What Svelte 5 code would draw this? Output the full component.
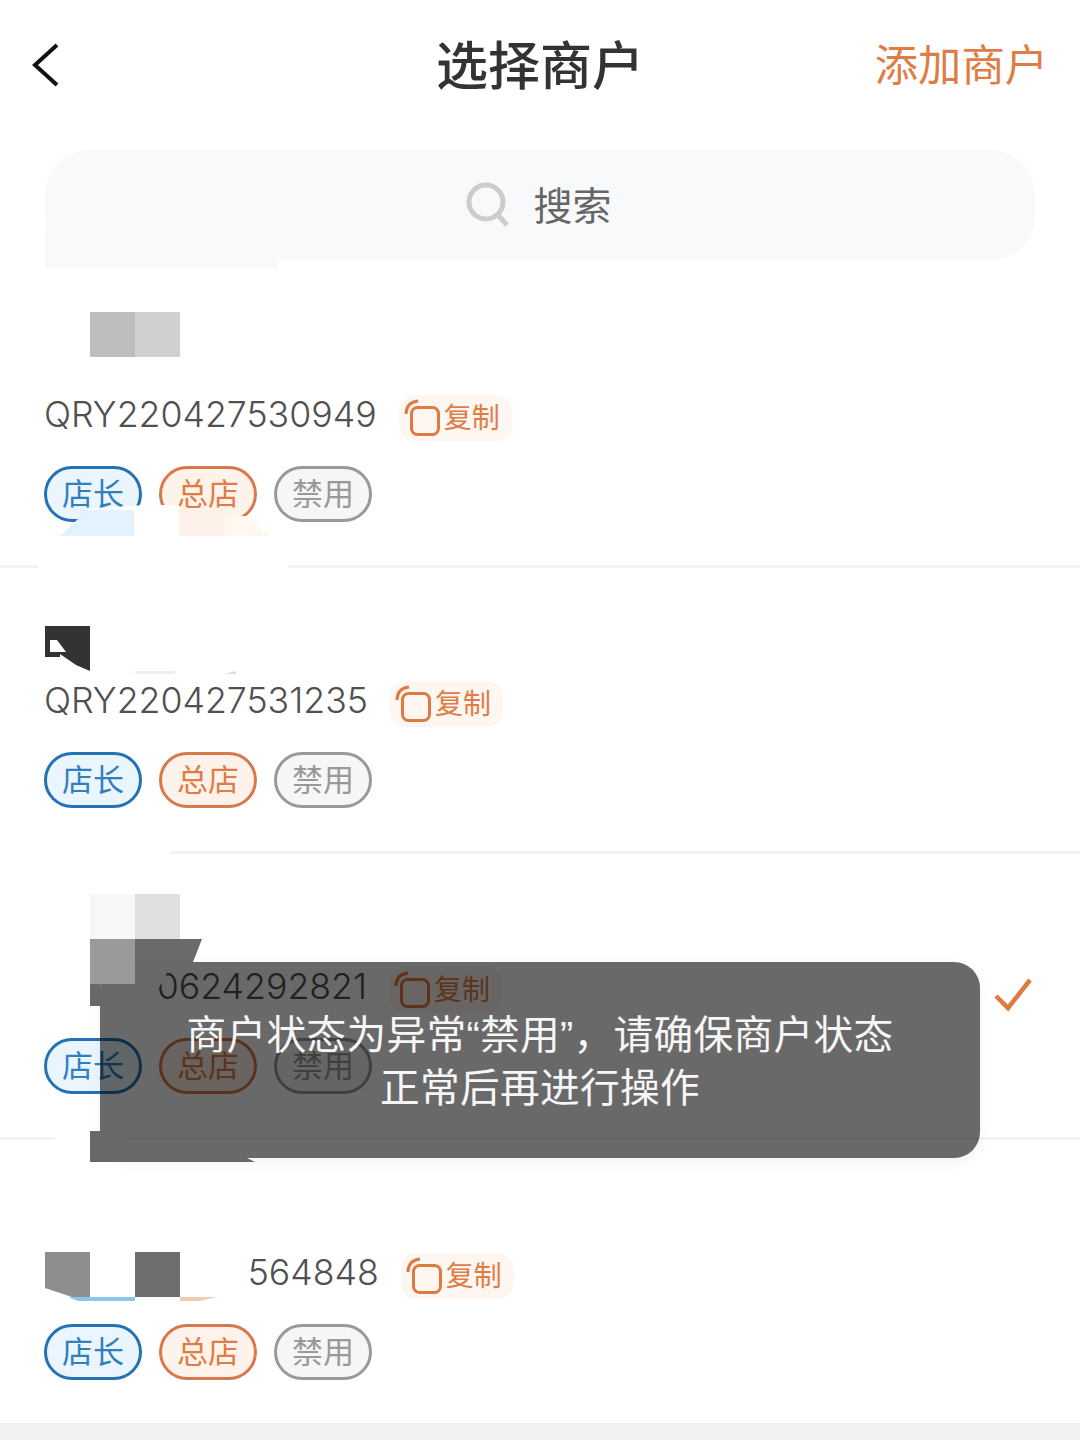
<script>
  const tags = [
    { label: '店长', kind: 'blue' },
    { label: '总店', kind: 'orange' },
    { label: '禁用', kind: 'grey' }
  ];
  const merchants = [
    { code: 'QRY220427530949', selected: false },
    { code: 'QRY220427531235', selected: false },
    { code: 'QRY770624292821', selected: true },
    { code: 'QRY220628564848', selected: false }
  ];
</script>

<div class="page">
  <header class="nav">
    <button class="back" aria-label="返回">
      <svg width="28" height="44" viewBox="0 0 28 44"><path d="M25 2 3 22l22 20" fill="none" stroke="#111" stroke-width="4"/></svg>
    </button>
    <h1>选择商户</h1>
    <span class="add">添加商户</span>
  </header>

  <div class="search">
    <svg width="46" height="46" viewBox="0 0 46 46"><circle cx="21" cy="21" r="17" fill="none" stroke="#ccc" stroke-width="5"/><path d="m32 33 10 11" fill="none" stroke="#ccc" stroke-width="5"/></svg>
    <span>搜索</span>
  </div>

  <ul class="list">
    {#each merchants as m}
      <li class="row">
        <div class="info">
          <div class="code-line">
            <span class="code">{m.code}</span>
            <span class="copy">
              <svg width="38" height="38" viewBox="0 0 38 38"><rect x="7.5" y="8.5" width="27" height="27" rx="6" fill="none" stroke="#df7a43" stroke-width="3"/><path d="M2 15C2 8 6 3 14 2" fill="none" stroke="#df7a43" stroke-width="3"/></svg>
              <span class="copy-label">复制</span>
            </span>
          </div>
          <div class="tags">
            {#each tags as t}
              <span class="tag {t.kind}">{t.label}</span>
            {/each}
          </div>
        </div>
        {#if m.selected}
          <svg class="check" width="38" height="36" viewBox="0 0 38 36"><path d="M2 19 14 31 36 3" fill="none" stroke="#df7a43" stroke-width="4.5"/></svg>
        {/if}
      </li>
    {/each}
  </ul>
  <div class="foot"></div>

  <svg class="mask" viewBox="0 0 1080 1440" aria-hidden="true">
    <rect x="45" y="225" width="50" height="43" fill="#f8f9fa"/>
    <rect x="45" y="258" width="233" height="10" fill="#f8f9fa"/>

    <rect x="90" y="312" width="45" height="45" fill="#bdbdbd"/>
    <rect x="135" y="312" width="45" height="45" fill="#d0d0d0"/>

    <rect x="38" y="536" width="250" height="34" fill="#fff"/>
    <polygon points="60,537 45,537 79,523 79,519" fill="#fff"/>
    <polygon points="79,510 143,505 178,505 178,537 134,537 60,537 79,519" fill="#fff"/>
    <polygon points="79,510 134,510 134,536 60,536 79,518" fill="#e3f3fd"/>
    <polygon points="154,505 179,505 179,537 154,537" fill="#fff"/>
    <rect x="179" y="510" width="45" height="26" fill="#fdf0e8"/>
    <polygon points="224,516 247,516 270,536 224,536" fill="#fef8ef"/>

    <polygon points="45,626 90,626 90,671 76,665 60,654 60,657 45,657" fill="#333"/>
    <polygon points="50,640 57,640 66,652 50,652" fill="#fff"/>
    <rect x="135" y="671" width="40" height="3" fill="#f0f0f0"/>
    <polygon points="224,674 236,671 236,674" fill="#ddd"/>
    <rect x="0" y="848" width="170" height="10" fill="#fff"/>

    <rect x="90" y="894" width="45" height="45" fill="#f7f7f7"/>
    <rect x="135" y="894" width="45" height="45" fill="#e0e0e0"/>
    <polygon points="44,964 172,964 149,1006 44,1006" fill="#fff"/>
    <rect x="55" y="1134" width="40" height="10" fill="#fff"/>
  </svg>

  <div class="toast">商户状态为异常“禁用”，请确保商户状态正常后再进行操作</div>

  <svg class="mask" viewBox="0 0 1080 1440" aria-hidden="true">
    <rect x="90" y="939" width="45" height="45" fill="#9a9a9a"/>
    <polygon points="135,939 202,939 193,962 135,962" fill="#6a6a6a"/>
    <rect x="90" y="984" width="10" height="22" fill="#686868"/>
    <polygon points="90,1131 127,1131 127,1158 247,1158 255,1162 90,1162" fill="#686868"/>

    <polygon points="44,1250 256,1250 248,1276 248,1302 44,1302" fill="#fff"/>
    <polygon points="45,1252 90,1252 90,1297 72,1297 45,1288" fill="#8e8e8e"/>
    <polygon points="68,1297 135,1297 135,1301 78,1301" fill="#8fc4ea"/>
    <rect x="135" y="1252" width="45" height="45" fill="#6e6e6e"/>
    <polygon points="180,1297 217,1297 200,1301 180,1301" fill="#eccdb4"/>
  </svg>
</div>

<style>
  :global(body) {
    margin: 0;
    background: #fff;
  }
  .page {
    position: relative;
    width: 1080px;
    height: 1440px;
    overflow: hidden;
    background: #fff;
    font-family: "Noto Sans CJK SC", "Noto Sans", sans-serif;
  }
  .nav {
    display: grid;
    grid-template-columns: 1fr auto 1fr;
    align-items: center;
    height: 132px;
  }
  .back {
    justify-self: start;
    display: flex;
    margin: 0 0 2px 32px;
    padding: 0;
    border: 0;
    background: none;
  }
  h1 {
    margin: 0 0 6px;
    font-size: 52px;
    font-weight: 500;
    line-height: 1;
    color: #333;
  }
  .add {
    justify-self: end;
    margin: 0 32px 6px 0;
    font-size: 43.3px;
    line-height: 1;
    color: #e07c45;
  }
  .search {
    display: flex;
    align-items: center;
    justify-content: center;
    gap: 22px;
    height: 110px;
    margin: 18px 45px 0;
    padding-right: 3px;
    border-radius: 44px;
    background: #f8f9fa;
    font-size: 39px;
    color: #666;
  }
  .search svg {
    margin-bottom: 2px;
  }
  .search span {
    margin-bottom: 4px;
  }
  .list {
    margin: 22px 0 0;
    padding: 0;
    list-style: none;
  }
  .row {
    display: flex;
    align-items: center;
    justify-content: space-between;
    box-sizing: border-box;
    height: 286px;
    padding: 112px 48px 43px 44px;
    border-bottom: 3px solid #f3f3f3;
  }
  .row:last-child {
    border-bottom-color: transparent;
  }
  .info {
    display: flex;
    flex-direction: column;
    gap: 32px;
  }
  .code-line {
    display: flex;
    align-items: center;
    gap: 22px;
    height: 40px;
  }
  .code {
    font-family: Inter, "Noto Sans", sans-serif;
    font-size: 35.7px;
    font-weight: 300;
    line-height: 40px;
    color: #505050;
  }
  .copy {
    display: flex;
    align-items: center;
    gap: 2px;
    height: 46px;
    margin-top: 8px;
    padding: 0 12px 0 5px;
    border-radius: 16px;
    background: #fef6f0;
    font-size: 28px;
    color: #e07c45;
  }
  .copy-label {
    padding-bottom: 4px;
  }
  .tags {
    display: flex;
    gap: 17px;
  }
  .tag {
    display: flex;
    align-items: center;
    justify-content: center;
    box-sizing: border-box;
    width: 98px;
    height: 56px;
    padding-bottom: 5px;
    border: 3px solid;
    border-radius: 28px;
    font-size: 31px;
    line-height: 1;
  }
  .blue {
    border-color: #2272b5;
    background: #eaf5fd;
    color: #2f80bf;
  }
  .orange {
    border-color: #d9784a;
    background: #fef3ea;
    color: #e07c45;
  }
  .grey {
    border-color: #999;
    background: #f6f6f7;
    color: #999;
  }
  .check {
    transform: translateY(-35px);
  }
  .foot {
    height: 20px;
    margin-top: -3px;
    background: #f1f2f4;
  }
  .mask {
    position: absolute;
    inset: 0;
    width: 1080px;
    height: 1440px;
    pointer-events: none;
  }
  .toast {
    position: absolute;
    top: 962px;
    left: 100px;
    box-sizing: border-box;
    width: 880px;
    height: 196px;
    padding: 47px 75px;
    border-radius: 26px;
    background: rgba(0, 0, 0, 0.59);
    box-shadow: 0 4px 14px rgba(0, 0, 0, 0.05);
    font-family: "Liberation Sans", "Noto Sans CJK SC", sans-serif;
    font-size: 39.7px;
    letter-spacing: 0.3px;
    line-height: 53px;
    text-align: center;
    color: #f6f6f6;
  }
</style>
